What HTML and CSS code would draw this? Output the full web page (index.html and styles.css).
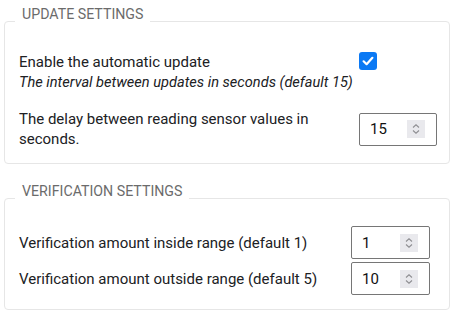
FILE: index.html
```html
<!DOCTYPE html>
<html lang="en">
<head>
<meta charset="utf-8">
<title>Settings</title>
<link rel="stylesheet" href="styles.css">
</head>
<body>
<fieldset class="group group--update">
  <legend class="group-title">Update settings</legend>
  <div class="row row--top">
    <div class="label">
      <div>Enable the automatic update</div>
      <div class="hint">The interval between updates in seconds (default 15)</div>
    </div>
    <span class="checkbox" role="checkbox" aria-checked="true">
      <svg viewBox="0 0 18 18" width="18" height="18"><path d="M4.6 9.3 L7.6 12.2 L13.4 5.8" fill="none" stroke="#fff" stroke-width="2.2" stroke-linecap="round" stroke-linejoin="round"/></svg>
    </span>
  </div>
  <div class="row">
    <div class="label label--narrow">The delay between reading sensor values in seconds.</div>
    <div class="number"><span class="number-value">15</span><span class="spin"><svg viewBox="0 0 18 18" width="18" height="18"><path d="M6 7.5 L9 4.8 L12 7.5 M6 10.5 L9 13.2 L12 10.5" fill="none" stroke="#8e8e92" stroke-width="1.1"/></svg></span></div>
  </div>
</fieldset>
<fieldset class="group group--verify">
  <legend class="group-title">Verification settings</legend>
  <div class="row row--tight">
    <div class="label">Verification amount inside range (default 1)</div>
    <div class="number"><span class="number-value">1</span><span class="spin"><svg viewBox="0 0 18 18" width="18" height="18"><path d="M6 7.5 L9 4.8 L12 7.5 M6 10.5 L9 13.2 L12 10.5" fill="none" stroke="#8e8e92" stroke-width="1.1"/></svg></span></div>
  </div>
  <div class="row row--tight">
    <div class="label">Verification amount outside range (default 5)</div>
    <div class="number"><span class="number-value">10</span><span class="spin"><svg viewBox="0 0 18 18" width="18" height="18"><path d="M6 7.5 L9 4.8 L12 7.5 M6 10.5 L9 13.2 L12 10.5" fill="none" stroke="#8e8e92" stroke-width="1.1"/></svg></span></div>
  </div>
</fieldset>
</body>
</html>
```

FILE: styles.css
```css
* { box-sizing: border-box; }
html, body { background: #fff; }
body {
  margin: 0;
  padding: 4px 0 0 4px;
  width: 454px;
  font-family: Roboto, "Noto Sans", sans-serif;
  font-size: 15px;
  line-height: 20px;
  color: #202124;
}
.group {
  margin: 0;
  width: 446px;
  border: 1px solid #e6e6e6;
  border-radius: 4px;
  min-inline-size: 0;
}
.group--update {
  padding: 13px 12px 14px 14px;
}
.group--verify {
  margin-top: 17px;
  padding: 10px 19px 14px 14px;
}
.group-title {
  padding: 0 7px 15px 7px;
  margin-left: -4px;
  text-transform: uppercase;
  color: #6b6b6b;
  font-size: 14.2px;
  line-height: 20px;
}
.row {
  display: grid;
  grid-template-columns: minmax(0, 1fr) 78px;
  align-items: center;
  column-gap: 9px;
}
.row + .row { margin-top: 17px; }
.row--top { align-items: start; }
.row--tight { grid-template-columns: minmax(0, 1fr) 79px; }
.row--tight + .row--tight { margin-top: 3px; }
.hint { font-style: italic; white-space: nowrap; font-size: 14.6px; }
.label--narrow { max-width: 300px; }
.checkbox {
  justify-self: start;
  display: block;
  width: 18px;
  height: 18px;
  border-radius: 3px;
  background: #0b79f4;
}
.checkbox svg { display: block; }
.number {
  height: 33px;
  border: 1px solid #767676;
  border-radius: 2px;
  display: flex;
  align-items: center;
  justify-content: space-between;
  padding: 0 11px 0 10px;
  font-size: 15px;
  color: #111;
}
.spin {
  width: 18px;
  height: 18px;
  background: #e9e9ed;
  display: block;
}
.spin svg { display: block; }
```
